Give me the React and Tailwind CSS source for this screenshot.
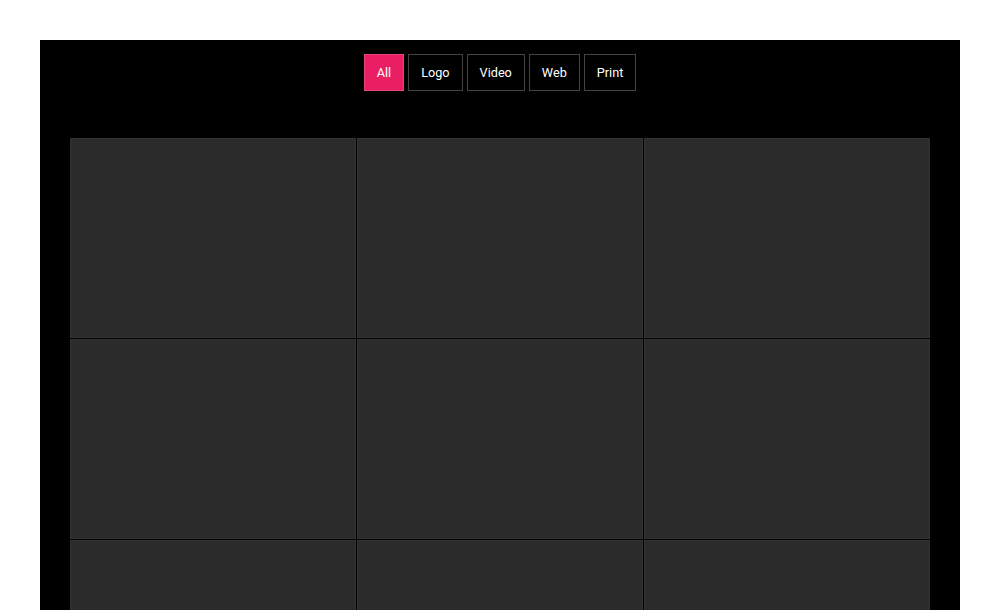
const filters = ['All', 'Logo', 'Video', 'Web', 'Print'];
const items = Array.from({ length: 9 }, (_, i) => i);

export default function App() {
  return (
    <div className="bg-white min-h-screen pt-10 px-10 font-['Roboto',sans-serif]">
      <div className="bg-black h-[570px] overflow-hidden">
        {/* Filter buttons */}
        <div className="flex justify-center gap-1 pt-[14px]">
          {filters.map((f, i) => (
            <button
              key={f}
              className={`h-[37px] px-[12px] text-[12.7px] text-white border ${
                i === 0 ? 'bg-[#e91e63] border-[#e5467c]' : 'bg-black border-[#444]'
              }`}
            >
              {f}
            </button>
          ))}
        </div>

        {/* Portfolio grid */}
        <div className="mx-[30px] mt-[47px] grid grid-cols-3 gap-px bg-black">
          {items.map((i) => (
            <div key={i} className="h-[200px] bg-[#2b2b2b] border border-[#333]" />
          ))}
        </div>
      </div>
    </div>
  );
}
